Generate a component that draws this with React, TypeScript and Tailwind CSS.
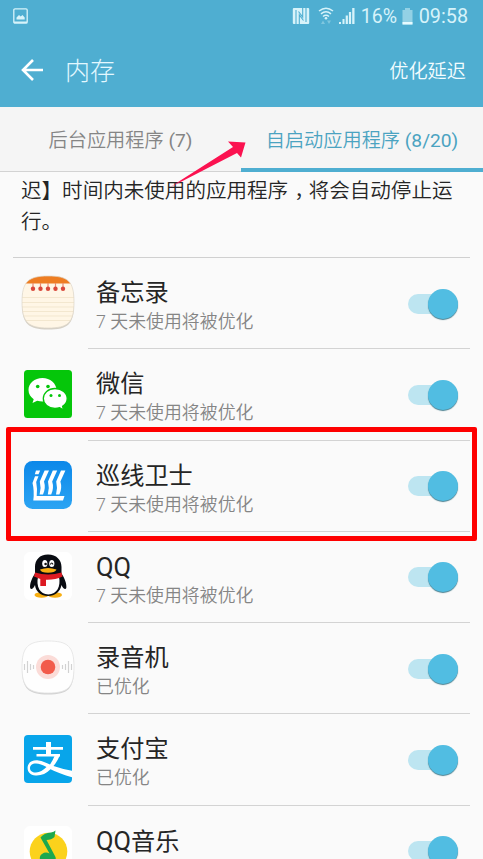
import React from "react";

function MemoIcon() {
  return (
    <svg width="54" height="56" viewBox="0 0 54 56">
      <defs>
        <clipPath id="memoClip">
          <path d="M27 1C47 1 53 6 53 27S47 53 27 53S1 47 1 27S7 1 27 1Z" />
        </clipPath>
      </defs>
      <path d="M27 2.4C47 2.4 53 7.4 53 28.4S47 54.4 27 54.4S1 48.4 1 28.4S7 2.4 27 2.4Z" fill="#d5d0c6" />
      <g clipPath="url(#memoClip)">
        <rect width="54" height="56" fill="#fff6e6" />
        <rect width="54" height="8.5" fill="#ee7d22" />
        <path d="M0 22.5H54M0 27.5H54M0 32H54M0 36.5H54M0 41H54M0 45.5H54" stroke="#f3e7cf" strokeWidth="1" />
      </g>
      <path d="M27 1C47 1 53 6 53 27S47 53 27 53S1 47 1 27S7 1 27 1Z" fill="none" stroke="#ddd6c8" strokeWidth=".7" />
      {[12, 19.5, 27, 34.5, 42].map((x) => (
        <g key={x} fill="#d9483b">
          <rect x={x - 0.6} y="8" width="1.2" height="5" fill="#e98a70" />
          <circle cx={x} cy="13.7" r="2.2" />
        </g>
      ))}
    </svg>
  );
}

function WeChatIcon() {
  return (
    <svg width="48" height="48" viewBox="0 0 48 48">
      <rect width="48" height="48" rx="3.5" fill="#05c60a" />
      <path d="M18.5 8C10.500 8 4.500 13.300 4.500 20C4.500 23.800 6.500 27 9.700 29.200L8.500 33L13.200 30.700C15 31.300 16.700 31.500 18.500 31.500C26 31.500 32.500 26.500 32.500 20S26 8 18.500 8Z" fill="#fff" />
      <path d="M31 18.500C24.300 18.500 19.300 22.900 19.300 28.500S24.300 38.500 31 38.500C32.700 38.500 34.300 38.200 35.700 37.700L39.500 40L38.600 36.300C41.400 34.500 43.200 31.700 43.200 28.500C43.200 22.900 38 18.500 31 18.500Z" fill="#fff" stroke="#05c60a" strokeWidth="1.300" />
      <g fill="#05c60a">
        <circle cx="13.700" cy="16.500" r="1.800" />
        <circle cx="24" cy="16.500" r="1.800" />
        <circle cx="27" cy="25.500" r="1.500" />
        <circle cx="35.500" cy="25.500" r="1.500" />
      </g>
    </svg>
  );
}

function GuardIcon() {
  return (
    <svg width="48" height="48" viewBox="0 0 48 48">
      <defs>
        <linearGradient id="guardFill" x1="0" y1="0" x2="0" y2="1">
          <stop offset="0" stopColor="#0c88e9" />
          <stop offset="1" stopColor="#2ba4f3" />
        </linearGradient>
      </defs>
      <rect width="48" height="48" rx="8.500" fill="url(#guardFill)" />
      <path
        d="M12 9.500H16.200L14.500 13.300H10.800ZM11 15.300H14.500L12.200 21Q13.600 28 12.700 35H40.500L39 39.500H9.300Q10.500 30 8.500 22ZM20.600 9.500H25L20 20.500Q22 27 19 33.500H15.600Q17.500 27 15.800 20.500ZM28.800 9.500H33.200L28.200 20.500Q30.200 27 27.200 33.500H23.800Q25.700 27 24 20.500ZM37 9.500H41.400L36.400 20.500Q38.400 27 35.400 33.500H32Q33.900 27 32.200 20.500Z"
        fill="#fff"
      />
    </svg>
  );
}

function QQIcon() {
  return (
    <svg width="48" height="48" viewBox="0 0 48 48">
      <rect width="48" height="48" rx="6" fill="#fff" />
      <ellipse cx="17.500" cy="43" rx="7" ry="2.700" fill="#f7ae12" />
      <ellipse cx="31" cy="43" rx="7" ry="2.700" fill="#f7ae12" />
      <path d="M24 2.500C15.500 2.500 11 8 11 15V21.500C8 26 5.500 32 6.200 36C7 38.200 9.500 36.500 11 33C11.500 39.500 17 44 24 44S36.500 39.500 37.500 33C39 36.500 41.500 38.200 42.300 36C43 32 40.500 26 37.500 21.500V15C37.500 8 32.500 2.500 24 2.500Z" fill="#090c12" />
      <path d="M14 25C17 22.500 32 22.500 35 25C37 34 33 42.500 24.300 42.500S12 34 14 25Z" fill="#fff" />
      <ellipse cx="20.800" cy="11.500" rx="2.600" ry="3.600" fill="#fff" />
      <ellipse cx="27.800" cy="11.500" rx="2.600" ry="3.600" fill="#fff" />
      <circle cx="21.600" cy="12" r="1.300" fill="#111" />
      <path d="M26.400 12.500Q27.700 9.500 29 12.500" stroke="#111" strokeWidth="1.200" fill="none" />
      <path d="M16 17.500Q24 14.500 32.500 17.500Q31 20.800 24 20.800T16 17.500Z" fill="#f7ae12" />
      <path d="M11 20.500Q24 24.500 37.500 20.500L38.500 24.500Q31 28 22 27.700V34H16.300V27L10 24.500Z" fill="#dc1a22" />
    </svg>
  );
}

function RecorderIcon() {
  return (
    <svg width="54" height="56" viewBox="0 0 54 56">
      <path d="M27 2.500C47 2.500 53 8 53 28.500S47 54.500 27 54.500S1 48.500 1 28.500S7 2.500 27 2.500Z" fill="#d2d2d2" />
      <path d="M27 1C47 1 53 6.500 53 27S47 53 27 53S1 47 1 27S7 1 27 1Z" fill="#fefefe" stroke="#e3e3e3" strokeWidth=".8" />
      <path d="M3.500 24V30M6.500 21V33M9.500 24V30M12.500 25V29M41.500 25V29M44.500 24V30M47.500 21V33M50.500 24V30" stroke="#d2d2d2" strokeWidth="1.200" />
      <circle cx="27" cy="27" r="12" fill="#fbdcd8" />
      <circle cx="27" cy="27" r="7.300" fill="#f25b4b" />
    </svg>
  );
}

function AlipayIcon() {
  return (
    <svg width="48" height="48" viewBox="0 0 48 48">
      <defs>
        <clipPath id="payClip">
          <rect width="48" height="48" rx="4" />
        </clipPath>
      </defs>
      <g clipPath="url(#payClip)">
        <rect width="48" height="48" fill="#08a5ea" />
        <path d="M9 12H39V14.700H9ZM22 7H27V20H22ZM12.500 19H36V21.500H12.500Z" fill="#fff" />
        <path d="M31 20H36Q33 27 29.500 31Q38 34 49 36V42.500Q36 39 26.500 34.300Q20 41 11.500 40.500C5.500 40 3 36 3.700 31.500C4.500 27 9 24.700 14.500 25.500C19 26.200 22.500 28 26 29.500Q29 25 31 20ZM22.500 32Q16.500 28.500 12 28.500C8 28.500 6 30.500 6 33C6 36 8.500 37.700 12 37.500Q17.500 37 22.500 32Z" fill="#fff" />
      </g>
    </svg>
  );
}

function MusicIcon() {
  return (
    <svg width="48" height="48" viewBox="0 0 48 48">
      <rect width="48" height="48" rx="6" fill="#fff" />
      <circle cx="24.500" cy="25.500" r="18.800" fill="#fbd21c" />
      <path d="M16.500 11.500Q20 7 27 6.500Q30 6 31.500 4.500L30.500 11Q27.500 14 22.500 14L31.500 31C33 37 28 41 22.500 39.500C15.500 37.700 14 30.500 18 28Q21.500 25.500 25.500 27.500Z" fill="#1ca84f" />
    </svg>
  );
}

const delayed = "7 天未使用将被优化";
const done = "已优化";

const apps = [
  { name: "备忘录", note: delayed, icon: <MemoIcon /> },
  { name: "微信", note: delayed, icon: <WeChatIcon /> },
  { name: "巡线卫士", note: delayed, icon: <GuardIcon /> },
  { name: "QQ", note: delayed, icon: <QQIcon /> },
  { name: "录音机", note: done, icon: <RecorderIcon /> },
  { name: "支付宝", note: done, icon: <AlipayIcon /> },
  { name: "QQ音乐", note: "", icon: <MusicIcon /> },
];

function AppName({ name }: { name: string }) {
  const latin = name.startsWith("QQ") ? "QQ" : "";
  return (
    <div className="h-8 text-[24.200px] leading-[32px]">
      {latin && <span className="text-[25.500px]">{latin}</span>}
      {name.slice(latin.length)}
    </div>
  );
}

function Toggle() {
  return (
    <div className="mr-[12px] mt-[1px] flex h-5 w-[50px] shrink-0 items-center justify-end rounded-full bg-[#bde5f1]">
      <div className="size-[30px] shrink-0 rounded-full bg-[#51bde2] shadow-[0_1px_1px_#4b8191]" />
    </div>
  );
}

function StatusBar() {
  return (
    <div className="flex h-8 items-center justify-between pl-[13px] pr-[15px] text-[#d7f3fa]">
      <svg width="15" height="16" viewBox="0 0 15 16">
        <rect x=".8" y=".8" width="13.400" height="14.400" rx="1.200" fill="none" stroke="currentColor" strokeWidth="1.300" />
        <path d="M1 13.500H14V15H1ZM3.500 11.500V9.500L6 7L7.700 8.500L9.500 7L11.700 9.500V11.500Z" fill="currentColor" />
      </svg>
      <div className="flex items-center">
        <svg width="18" height="18" viewBox="0 0 18 18" className="mr-[8px]">
          <rect x=".8" y="1" width="16.400" height="16" rx="1" fill="currentColor" />
          <path d="M4 3V17M14 1V15M7.300 17V8L11.500 13.500M10.700 1V10L6.500 4.500" fill="none" stroke="#4faed1" strokeWidth="1.100" />
        </svg>
        <svg width="16" height="18" viewBox="0 0 16 18" className="mr-[5px]">
          <g fill="none" stroke="currentColor" strokeWidth="1.500">
            <path d="M1 4Q8 -1.500 15 4M3 6.800Q8 2.800 13 6.800M5 9.500Q8 7 11 9.500" />
          </g>
          <circle cx="8" cy="11.300" r="1.300" fill="currentColor" />
          <path d="M3 17L5 13.500L7 17ZM9 13.500H13L11 17Z" fill="currentColor" opacity=".35" />
        </svg>
        <svg width="16" height="16" viewBox="0 0 16 16" className="mr-[6px]" fill="currentColor">
          <path d="M0 14H2V16H0ZM3.500 11H5.500V16H3.500ZM6.700 7.500H8.900V16H6.700ZM9.900 4H12.100V16H9.900ZM13.200 0H15.500V16H13.200Z" />
        </svg>
        <span className="w-[41px] whitespace-nowrap pt-[2px] text-[19.500px] leading-[30px]">16%</span>
        <svg width="11" height="17" viewBox="0 0 11 17" className="mr-[6px]">
          <path d="M3 0H8V2H10.500V16.500H.5V2H3Z" fill="#93d1e5" />
          <path d="M.5 14H10.500V16.500H.5Z" fill="#e7fbff" />
        </svg>
        <span className="pt-[2px] text-[19.800px] leading-[30px]">09:58</span>
      </div>
    </div>
  );
}

export default function App() {
  return (
    <div className="relative h-[859px] w-[483px] overflow-hidden bg-[#fafafa] font-['Roboto','Noto_Sans_CJK_SC',sans-serif] text-[#252525]">
      <header className="h-[107px] bg-[#4faed1]">
        <StatusBar />
        <div className="flex h-[75px] items-center pl-[21px] pr-[17px] pt-[1px]">
          <svg width="23" height="22" viewBox="0 0 23 22" fill="none" stroke="#fff" strokeWidth="2.600">
            <path d="M22 11H2M12 1L2 11L12 21" />
          </svg>
          <h1 className="ml-[21px] pt-[3px] text-[25px] font-light leading-9 text-[#e3f8ff]">内存</h1>
          <span className="ml-auto pt-[3px] text-[19.200px] font-[350] leading-8 text-[#f3fdff]">优化延迟</span>
        </div>
      </header>

      <nav className="flex h-[65px] bg-[#f5f5f5] text-[19.200px] font-[350]">
        <div className="flex w-[241px] items-center justify-center whitespace-pre border-b border-[#d3d3d3] pt-[5px] text-[#858585]">
          后台应用程序<span className="font-normal"> (7)</span>
        </div>
        <div className="flex flex-1 items-center justify-center whitespace-pre border-b-4 border-[#4faed1] pt-[8px] text-[#4ba3c1]">
          自启动应用程序<span className="font-normal"> (8/20)</span>
        </div>
      </nav>

      <p className="mx-[13px] h-[86px] whitespace-nowrap border-b border-[#d0d0d0] pl-2 pt-[4px] text-[20.550px] font-[350] leading-[31px]">
        迟】时间内未使用的应用程序<span className="ml-[6px] mr-[4.250px] [font-feature-settings:'halt']">，</span>将会自动停止运
        <br />
        行。
      </p>

      <ul>
        {apps.map((app) => (
          <li key={app.name} className="flex h-[91.250px] pl-[13px] pr-[13px]">
            <div className="flex w-[70px] items-center justify-center pb-[2px]">{app.icon}</div>
            <div className="ml-[5px] flex flex-1 items-center border-b border-[#d3d3d3] pl-2">
              <div className="flex-1 whitespace-nowrap pt-[6px]">
                <AppName name={app.name} />
                <div className="h-[26px] text-[17.900px] font-[350] leading-[26px] text-[#858585]">{app.note}</div>
              </div>
              <Toggle />
            </div>
          </li>
        ))}
      </ul>

      <div className="absolute left-[6px] top-[427px] h-[114px] w-[471px] rounded-[2px] border-[5px] border-[#fe0000]" />
      <svg className="absolute left-[160px] top-[135px]" width="90" height="60" viewBox="0 0 90 60">
        <defs>
          <linearGradient id="pointer" x1="0" y1="1" x2="1" y2="0">
            <stop offset="0" stopColor="#ff0b50" stopOpacity="0" />
            <stop offset=".18" stopColor="#fb1250" />
          </linearGradient>
        </defs>
        <path d="M7 54L73 12L68 6.500L85.500 7.500L81 22.500L77 18Z" fill="url(#pointer)" />
      </svg>
    </div>
  );
}
